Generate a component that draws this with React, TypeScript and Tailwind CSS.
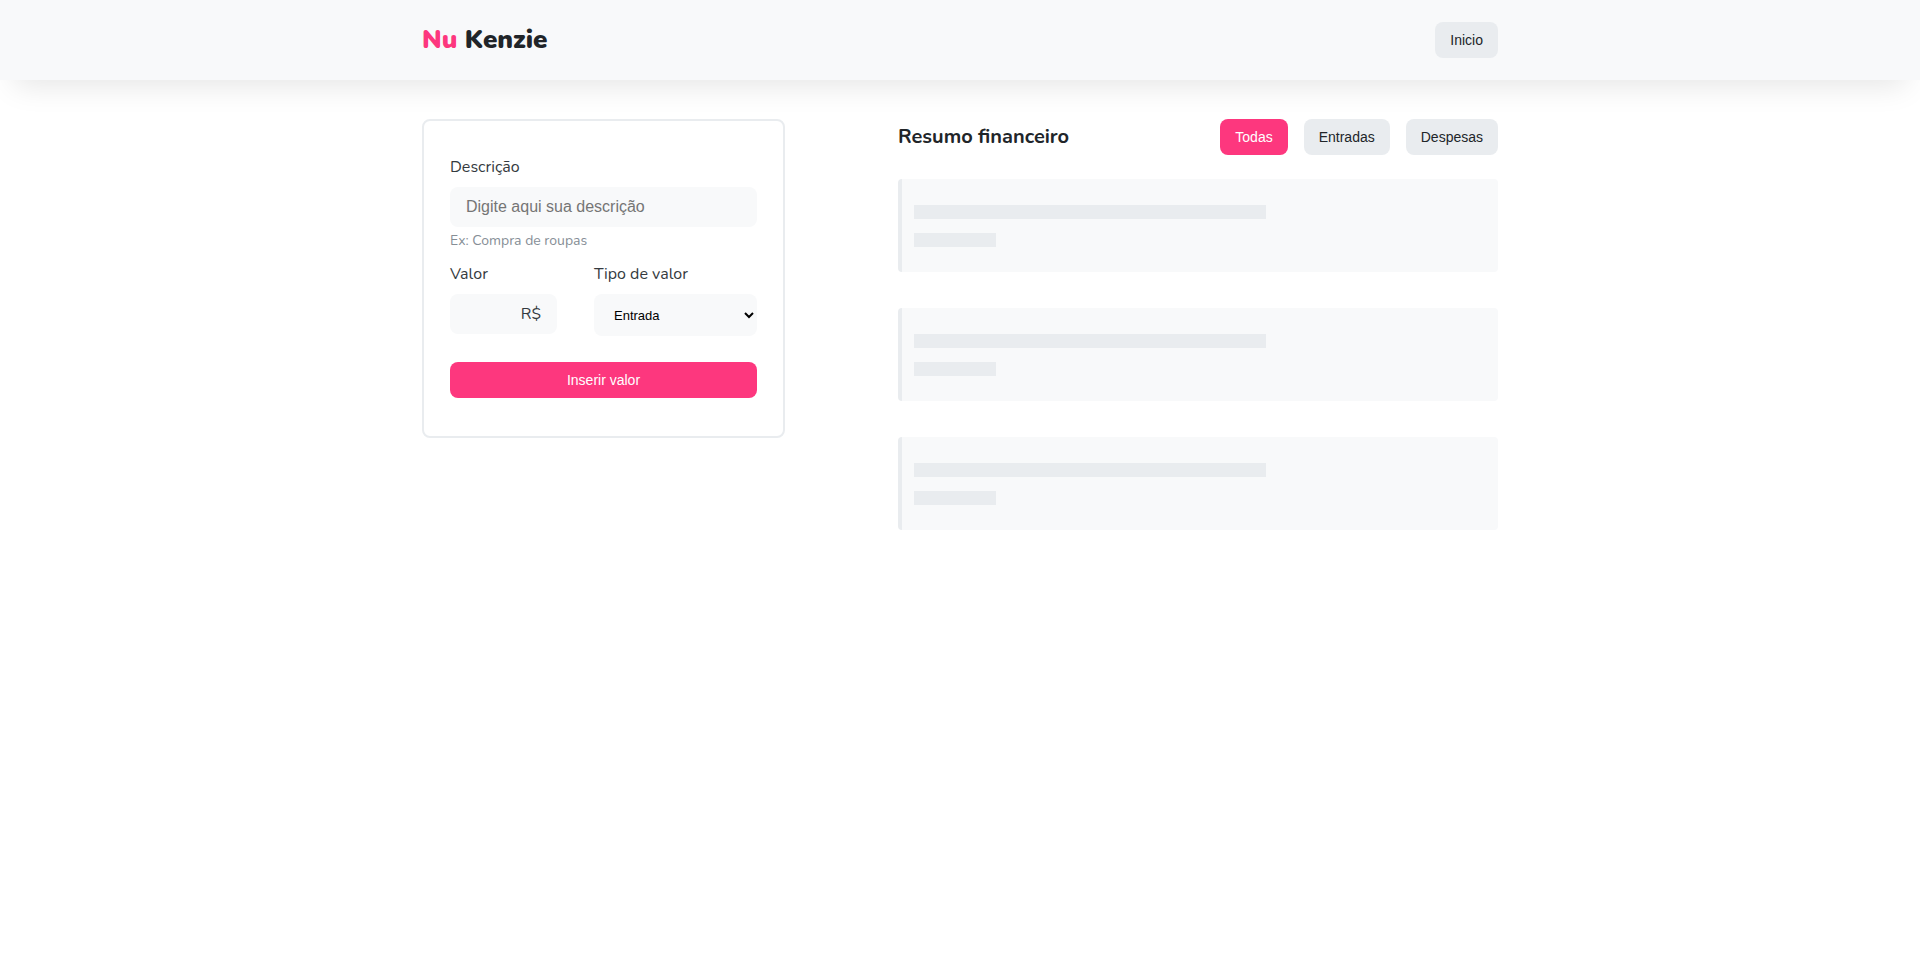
const filters = ["Todas", "Entradas", "Despesas"];

const buttonBase =
  "h-9 rounded-lg px-[15px] font-['Liberation_Sans',Arial,sans-serif] text-sm cursor-pointer";

function Header() {
  return (
    <header className="bg-[#f8f9fa] shadow-[0_20px_30px_-14px_rgba(0,0,0,0.1)]">
      <div className="mx-auto flex h-20 max-w-[1076px] items-center justify-between">
        <h1 className="text-[26px] leading-8 font-black text-[#212529]">
          <span className="text-[#fd377e]">Nu</span> Kenzie
        </h1>
        <button type="button" className={`${buttonBase} bg-[#e9ecef] text-[#212529]`}>
          Inicio
        </button>
      </div>
    </header>
  );
}

function EntryForm() {
  return (
    <form
      className="w-[363px] shrink-0 rounded-lg border-2 border-[#e9ecef] px-[26px] pt-[34px] pb-[38px] text-[#343a40]"
      onSubmit={(event) => event.preventDefault()}
    >
      <label htmlFor="description" className="block leading-6">
        Descrição
      </label>
      <input
        id="description"
        type="text"
        placeholder="Digite aqui sua descrição"
        className="mt-2 block h-10 w-full rounded-lg bg-[#f8f9fa] px-4 font-['Liberation_Sans',Arial,sans-serif] outline-none placeholder:text-[#757575]"
      />
      <p className="mt-1 text-sm leading-5 text-[#868e96]">Ex: Compra de roupas</p>

      <div className="mt-[11px] flex items-start justify-between">
        <div className="w-[107px]">
          <label htmlFor="amount" className="block leading-6">
            Valor
          </label>
          <div className="mt-2 flex h-10 items-center rounded-lg bg-[#f8f9fa] px-4">
            <input
              id="amount"
              type="text"
              inputMode="decimal"
              className="w-full min-w-0 bg-transparent font-['Liberation_Sans',Arial,sans-serif] outline-none"
            />
            <span>R$</span>
          </div>
        </div>
        <div className="w-[163px]">
          <label htmlFor="kind" className="block leading-6">
            Tipo de valor
          </label>
          <select
            id="kind"
            className="mt-2 block h-[42px] w-full rounded-lg bg-[#f8f9fa] pl-4 font-['Liberation_Sans',Arial,sans-serif] text-[13px] text-black outline-none"
          >
            <option>Entrada</option>
            <option>Despesa</option>
          </select>
        </div>
      </div>

      <button type="submit" className={`${buttonBase} mt-[26px] w-full bg-[#fd377e] text-white`}>
        Inserir valor
      </button>
    </form>
  );
}

function EmptyCard() {
  return (
    <li className="flex flex-col gap-[14px] rounded border-l-4 border-[#e9ecef] bg-[#f8f9fa] px-3 pt-[26px] pb-[25px]">
      <div className="h-[14px] w-[352px] bg-[#e9ecef]" />
      <div className="h-[14px] w-[82px] bg-[#e9ecef]" />
    </li>
  );
}

function Summary() {
  return (
    <section className="w-[600px]">
      <div className="flex items-center justify-between">
        <h2 className="text-xl font-bold text-[#212529]">Resumo financeiro</h2>
        <div className="flex gap-4">
          {filters.map((name, index) => (
            <button
              key={name}
              type="button"
              className={`${buttonBase} ${
                index === 0 ? "bg-[#fd377e] text-white" : "bg-[#e9ecef] text-[#212529]"
              }`}
            >
              {name}
            </button>
          ))}
        </div>
      </div>
      <ul className="mt-6 flex flex-col gap-9">
        <EmptyCard />
        <EmptyCard />
        <EmptyCard />
      </ul>
    </section>
  );
}

export default function App() {
  return (
    <div className="min-h-screen bg-white font-[Nunito,Lato,sans-serif]">
      <Header />
      <main className="mx-auto flex max-w-[1076px] items-start justify-between pt-[39px]">
        <EntryForm />
        <Summary />
      </main>
    </div>
  );
}
